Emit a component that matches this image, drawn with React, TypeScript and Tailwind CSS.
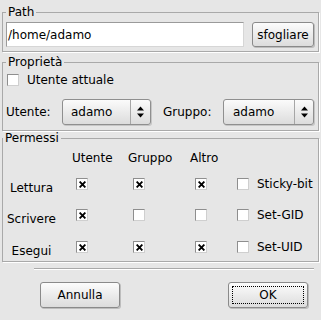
import type { ReactNode } from "react";

function Check({ checked }: { checked?: boolean }) {
  return (
    <span className="flex h-[12px] w-[12px] shrink-0 items-center justify-center border border-[#8e8e8e] border-r-[#cfcfcf] border-b-[#cfcfcf] bg-white">
      {checked && (
        <svg width="7" height="7" viewBox="0 0 7 7">
          <path d="M0.6 0.6L6.4 6.4M6.4 0.6L0.6 6.4" stroke="#000" strokeWidth="1.9" />
        </svg>
      )}
    </span>
  );
}

function Group({ title, className, children }: { title: string; className?: string; children: ReactNode }) {
  return (
    <fieldset
      className={
        "ml-[2px] w-[317px] border border-[#a9a9a9] shadow-[1px_1px_0_#ffffff] " + (className ?? "")
      }
    >
      <legend className="px-[2px] leading-[14px]">{title}</legend>
      {children}
    </fieldset>
  );
}

function Button({ label, focus, className }: { label: string; focus?: boolean; className?: string }) {
  return (
    <button
      className={
        "flex items-center justify-center rounded-[3px] border border-[#8a8a8a] bg-linear-to-b from-[#fcfcfc] to-[#dcdcdc] shadow-[1px_1px_0_#bdbdbd] " +
        (className ?? "")
      }
    >
      {focus ? (
        <span className="flex h-[18px] w-[72px] items-center justify-center border border-dotted border-black">
          {label}
        </span>
      ) : (
        label
      )}
    </button>
  );
}

function Combo({ value, w, arrowW, pl }: { value: string; w: string; arrowW: string; pl: string }) {
  return (
    <div
      className={
        "flex h-[26px] items-stretch rounded-[3px] border border-[#8f8f8f] bg-linear-to-b from-[#fbfbfb] to-[#dcdcdc] shadow-[1px_1px_0_#c6c6c6] " +
        w
      }
    >
      <span className={"flex flex-1 items-center " + pl}>{value}</span>
      <span className={"flex items-center justify-center border-l border-[#a6a6a6] " + arrowW}>
        <svg width="7" height="12" viewBox="0 0 7 12">
          <path d="M3.5 0.5L7 4.5H0Z M0 7.5H7L3.5 11.5Z" fill="#000" />
        </svg>
      </span>
    </div>
  );
}

const rows = [
  { label: "Lettura", checks: [true, true, true], extra: "Sticky-bit", h: "h-[31px]" },
  { label: "Scrivere", checks: [true, false, false], extra: "Set-GID", h: "h-[32px]" },
  { label: "Esegui", checks: [true, true, true], extra: "Set-UID", h: "h-[22px]" },
];

const colW = ["w-[56px] pl-[4px]", "w-[62px] pl-[5px]", "w-[47px] pl-[5px]"];

export default function App() {
  return (
    <div className="h-[320px] w-[321px] overflow-hidden bg-[#e6e6e6] pt-[5px] font-['DejaVu_Sans',sans-serif] text-[12px] text-black">
      {/* Path */}
      <Group title="Path" className="px-[3px] pt-[3px] pb-[4px]">
        <div className="flex items-start gap-[8px]">
          <div className="flex h-[25px] w-[238px] items-center border border-[#9a9a9a] border-r-[#d6d6d6] border-b-[#d6d6d6] bg-white pl-[1px]">
            /home/adamo
          </div>
          <Button label="sfogliare" className="h-[25px] w-[62px]" />
        </div>
      </Group>

      {/* Proprietà */}
      <Group title="Proprietà" className="mt-[3px] pl-[3px] pb-[5px]">
        <div className="mt-[5px] ml-[1px] flex h-[12px] items-center gap-[8px] leading-[14px]">
          <Check />
          <span>Utente attuale</span>
        </div>
        <div className="mt-[13px] flex items-center">
          <span className="w-[56px]">Utente:</span>
          <Combo value="adamo" w="w-[89px]" arrowW="w-[20px]" pl="pl-[8px]" />
          <span className="ml-[12px] w-[60px]">Gruppo:</span>
          <Combo value="adamo" w="w-[91px]" arrowW="w-[19px]" pl="pl-[9px]" />
        </div>
      </Group>

      {/* Permessi */}
      <Group title="Permessi" className="pl-0">
        <div className="mt-[6px] flex pl-[69px] leading-[14px]">
          <span className="w-[56px]">Utente</span>
          <span className="w-[62px]">Gruppo</span>
          <span className="w-[47px]">Altro</span>
        </div>
        <div className="mt-[11px]">
          {rows.map((r) => (
            <div key={r.label} className={"flex items-start " + r.h}>
              <span className="mt-[5px] mr-[12px] w-[57px] text-center leading-[14px]">{r.label}</span>
              {r.checks.map((c, i) => (
                <span key={i} className={"mt-[2px] " + colW[i]}>
                  <Check checked={c} />
                </span>
              ))}
              <span className="mt-[1px] flex h-[14px] items-center gap-[8px] leading-[14px]">
                <Check />
                <span>{r.extra}</span>
              </span>
            </div>
          ))}
        </div>
      </Group>

      <div className="mt-[6px] ml-[34px] h-[2px] w-[280px] border-t border-[#a9a9a9] bg-white" />

      <div className="mt-[12px] flex">
        <Button label="Annulla" className="ml-[40px] h-[26px] w-[80px]" />
        <Button label="OK" focus className="ml-[108px] h-[26px] w-[80px]" />
      </div>
    </div>
  );
}
